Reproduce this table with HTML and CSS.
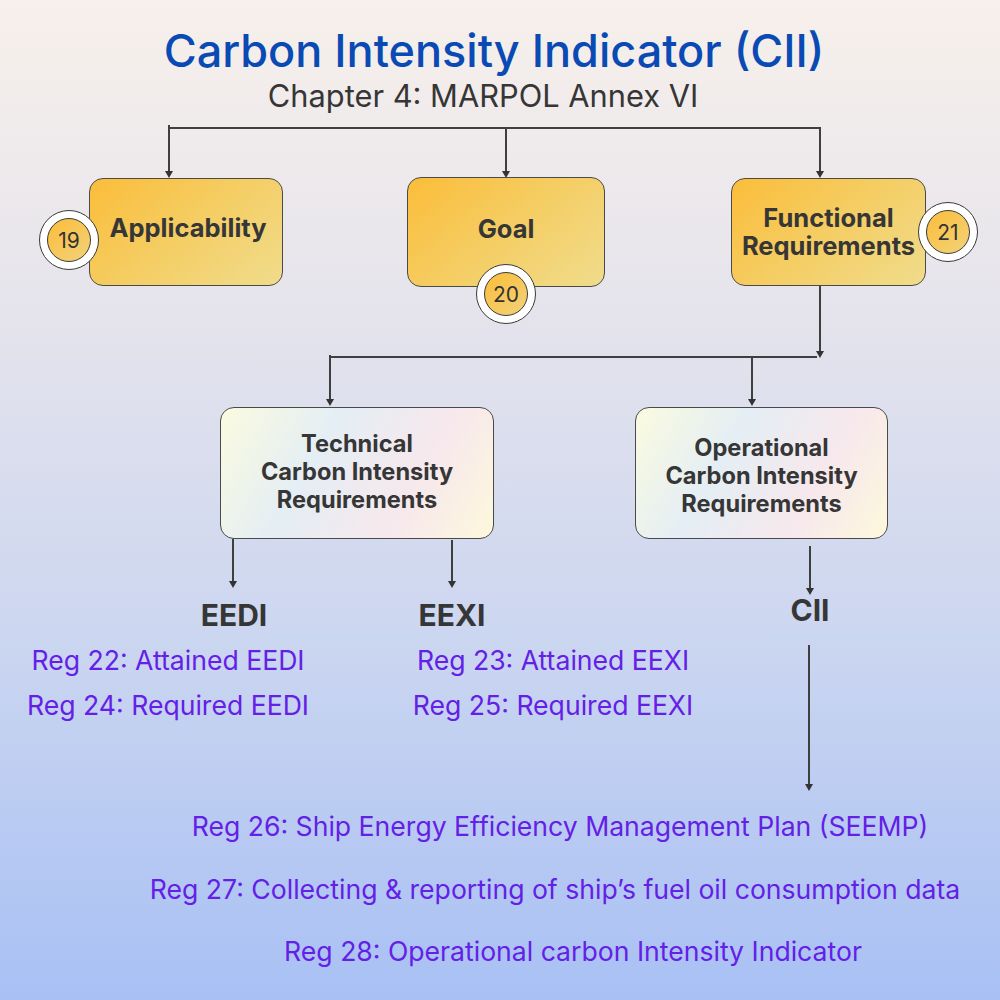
FILE: index.html
```html
<!DOCTYPE html>
<html>
<head>
<meta charset="utf-8">
<link rel="stylesheet" href="styles.css">
</head>
<body>
<div class="canvas">
  <header class="head">
    <h1 class="title">Carbon Intensity Indicator (CII)</h1>
    <p class="subtitle">Chapter 4: MARPOL Annex VI</p>
  </header>

  <svg class="wires" width="1000" height="1000" viewBox="0 0 1000 1000">
    <g stroke="#3f3f3f" stroke-width="2" fill="none">
      <path d="M169 128 H821"/>
      <path d="M169 125 V171"/>
      <path d="M506 128 V171"/>
      <path d="M820 128 V171"/>
      <path d="M820 286 V351"/>
      <path d="M330 357 H817"/>
      <path d="M330 355 V399"/>
      <path d="M752 357 V399"/>
      <path d="M233 539 V581"/>
      <path d="M452 540 V581"/>
      <path d="M810 546 V588"/>
      <path d="M809 645 V784"/>
    </g>
    <g fill="#333">
      <polygon points="165,171 173,171 169,178"/>
      <polygon points="502,171 510,171 506,178"/>
      <polygon points="816,171 824,171 820,178"/>
      <polygon points="816,351 824,351 820,358"/>
      <polygon points="326,399 334,399 330,406"/>
      <polygon points="748,399 756,399 752,406"/>
      <polygon points="229,581 237,581 233,588"/>
      <polygon points="448,581 456,581 452,588"/>
      <polygon points="806,588 814,588 810,595"/>
      <polygon points="805,784 813,784 809,791"/>
    </g>
  </svg>

  <div class="node gold n-app">Applicability</div>
  <div class="node gold n-goal">Goal</div>
  <div class="node gold n-func">Functional<br>Requirements</div>

  <div class="badge b19"><span>19</span></div>
  <div class="badge b20"><span>20</span></div>
  <div class="badge b21"><span>21</span></div>

  <div class="node pale n-tech">Technical<br>Carbon Intensity<br>Requirements</div>
  <div class="node pale n-oper">Operational<br>Carbon Intensity<br>Requirements</div>

  <div class="label l-eedi">EEDI</div>
  <div class="label l-eexi">EEXI</div>
  <div class="label l-cii">CII</div>

  <ul class="regs r-eedi">
    <li>Reg 22: Attained EEDI</li>
    <li>Reg 24: Required EEDI</li>
  </ul>
  <ul class="regs r-eexi">
    <li>Reg 23: Attained EEXI</li>
    <li>Reg 25: Required EEXI</li>
  </ul>

  <p class="reg r26">Reg 26: Ship Energy Efficiency Management Plan (SEEMP)</p>
  <p class="reg r27">Reg 27: Collecting &amp; reporting of ship’s fuel oil consumption data</p>
  <p class="reg r28">Reg 28: Operational carbon Intensity Indicator</p>
</div>
</body>
</html>
```

FILE: styles.css
```css
* { box-sizing: border-box; }
html, body { margin: 0; padding: 0; }
body {
  font-family: Inter, "Noto Sans", "Liberation Sans", sans-serif;
}
.canvas {
  position: relative;
  width: 1000px;
  height: 1000px;
  overflow: hidden;
  background: linear-gradient(180deg, #f7f0eb 0%, #e6e4ec 30%, #cdd7f0 62%, #a8c0f4 100%);
}
.head {
  display: flex;
  flex-direction: column;
  align-items: center;
  padding-top: 24px;
  padding-right: 12px;
}
.title {
  margin: 0;
  font-size: 45px;
  font-weight: 500;
  line-height: 54px;
  color: #0a4ab4;
}
.subtitle {
  margin: 0;
  font-size: 30.8px;
  font-weight: 400;
  line-height: 36px;
  color: #363636;
  margin-right: 22px;
}
.wires {
  position: absolute;
  left: 0;
  top: 0;
}
.node {
  position: absolute;
  display: flex;
  align-items: center;
  justify-content: center;
  text-align: center;
  color: #363636;
  font-weight: 700;
  border: 1.5px solid #4a4a4a;
  border-radius: 14px;
}
.gold {
  background: linear-gradient(140deg, #fbbd3a 0%, #f5cc60 45%, #f0dc8c 100%);
  font-size: 25.5px;
  line-height: 28px;
}
.n-app { left: 89px; top: 178px; width: 194px; height: 108px; padding: 0 0 8px 4px; }
.n-goal { left: 407px; top: 177px; width: 198px; height: 110px; padding-bottom: 6px; }
.n-func { left: 731px; top: 178px; width: 195px; height: 108px; padding-top: 0; padding-bottom: 0; }

.badge {
  position: absolute;
  width: 60px;
  height: 60px;
  border-radius: 50%;
  background: #fff;
  border: 1.5px solid #3a3a3a;
  display: flex;
  align-items: center;
  justify-content: center;
}
.badge span {
  width: 44px;
  height: 44px;
  border-radius: 50%;
  border: 1.5px solid #3a3a3a;
  background: linear-gradient(140deg, #fbbd3a 0%, #f2d27a 100%);
  display: flex;
  align-items: center;
  justify-content: center;
  font-size: 21px;
  color: #333;
}
.b19 { left: 39px; top: 210px; }
.b20 { left: 476px; top: 264px; }
.b21 { left: 918px; top: 202px; }

.pale {
  background: linear-gradient(120deg, #fbfbe0 0%, #e4eef4 35%, #f7e8ec 70%, #fdf8dc 100%);
  font-size: 23.6px;
  line-height: 28px;
  font-weight: 700;
}
.n-tech { left: 220px; top: 407px; width: 274px; height: 132px; padding-bottom: 2px; }
.n-oper { left: 635px; top: 407px; width: 253px; height: 132px; padding-top: 5px; }

.label {
  position: absolute;
  font-size: 30px;
  line-height: 36px;
  font-weight: 700;
  color: #363636;
  width: 120px;
  text-align: center;
}
.l-eedi { left: 174px; top: 597px; }
.l-eexi { left: 392px; top: 597px; }
.l-cii { left: 750px; top: 592px; }

.regs {
  position: absolute;
  list-style: none;
  margin: 0;
  padding: 0;
  display: flex;
  flex-direction: column;
  align-items: center;
  gap: 13px;
  width: 340px;
}
.regs li, .reg {
  font-size: 26.6px;
  line-height: 32px;
  color: #6420e6;
  white-space: nowrap;
}
.r-eedi { left: -2px; top: 644px; }
.r-eexi { left: 383px; top: 644px; }
.reg {
  position: absolute;
  margin: 0;
  width: 1000px;
  text-align: center;
}
.r26 { left: 60px; top: 810px; }
.r27 { left: 55px; top: 873px; }
.r28 { left: 73px; top: 935px; }
```
